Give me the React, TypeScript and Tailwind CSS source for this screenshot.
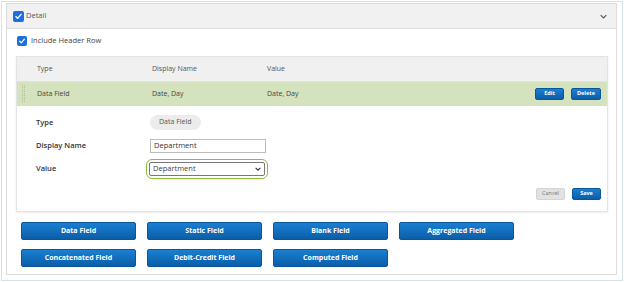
function CheckBox({ size }: { size: number }) {
  return (
    <span
      className="flex items-center justify-center rounded-[2px] bg-[#1b6fe0] shrink-0"
      style={{ width: size, height: size }}
    >
      <svg viewBox="0 0 12 12" className="w-[80%] h-[80%]">
        <path d="M2.5 6.3 L5 8.7 L9.6 3.2" fill="none" stroke="white" strokeWidth="1.9" strokeLinecap="round" strokeLinejoin="round" />
      </svg>
    </span>
  );
}

function SmallBtn({ label, w }: { label: string; w: string }) {
  return (
    <button
      className={`${w} h-[12px] rounded-[2px] border border-[#0b559a] bg-gradient-to-b from-[#1a7fd2] to-[#0b5ea8] text-white text-[5.5px] font-bold leading-none flex items-center justify-center`}
    >
      {label}
    </button>
  );
}

function Grip() {
  const dots = [];
  for (let r = 0; r < 9; r++) {
    for (let c = 0; c < 2; c++) {
      dots.push(<rect key={`${r}-${c}`} x={c * 2} y={r * 2} width="1" height="1" fill="#aebf9b" />);
    }
  }
  return (
    <svg viewBox="0 0 3 18" className="w-[3px] h-[18px]">
      {dots}
    </svg>
  );
}

export default function App() {
  const fields = [
    "Data Field",
    "Static Field",
    "Blank Field",
    "Aggregated Field",
    "Concatenated Field",
    "Debit-Credit Field",
    "Computed Field",
  ];

  return (
    <div className="w-[624px] h-[282px] p-px bg-white font-['Open_Sans',sans-serif]">
      <div className="h-full border border-[#d5e2ec] pl-[4px] pt-[1px] pr-[5px] pb-[5px]">
        <div className="h-full border border-[#dcdcdc] flex flex-col">
          {/* panel header */}
          <div className="h-[25px] bg-[#f1f1f1] border-b border-[#dedede] flex items-center pl-[6px] pr-[9px]">
            <CheckBox size={11} />
            <span className="ml-[2px] text-[7.5px] text-[#555]">Detail</span>
            <svg viewBox="0 0 10 6" className="ml-auto w-[7px] h-[5px]">
              <path d="M1 1 L5 5 L9 1" fill="none" stroke="#555" strokeWidth="1.6" />
            </svg>
          </div>

          <div className="flex-1 pl-[9px] pr-[8px] pt-[7px]">
            <div className="flex items-center h-[10px] ml-px">
              <CheckBox size={10} />
              <span className="ml-[4px] text-[7.5px] text-[#444]">Include Header Row</span>
            </div>

            {/* table card */}
            <div className="mt-[10px] border border-[#e3e3e3] shadow-[0_1px_2px_rgba(0,0,0,0.08)]">
              <div className="h-[25px] bg-[#f0f0f0] border-b border-[#e2e2e2] grid grid-cols-[115px_115px_1fr] items-center pl-[20px] text-[7px] text-[#555]">
                <span>Type</span>
                <span>Display Name</span>
                <span>Value</span>
              </div>
              <div className="h-[24px] bg-[#d4e3bd] flex items-center pl-[5px] pr-[6px] text-[7px] text-[#444]">
                <Grip />
                <div className="ml-[12px] grid grid-cols-[115px_115px_1fr] flex-1">
                  <span>Data Field</span>
                  <span>Date, Day</span>
                  <span>Date, Day</span>
                </div>
                <div className="flex gap-[7px]">
                  <SmallBtn label="Edit" w="w-[29px]" />
                  <SmallBtn label="Delete" w="w-[30px]" />
                </div>
              </div>

              {/* edit form */}
              <div className="pl-[19px] pr-[6px] pt-[9px] pb-[11px]">
                <div className="flex flex-col gap-[8px] text-[7.5px]">
                  <div className="flex items-center h-[15px]">
                    <span className="w-[114px] font-semibold text-[#333]">Type</span>
                    <span className="h-[15px] px-[9px] rounded-full bg-[#ececec] text-[#555] text-[7px] flex items-center">
                      Data Field
                    </span>
                  </div>
                  <div className="flex items-center h-[15px]">
                    <span className="w-[114px] font-semibold text-[#333]">Display Name</span>
                    <div className="w-[116px] h-[14px] border border-[#bdbdbd] pl-[3px] flex items-center text-[#333]">
                      Department
                    </div>
                  </div>
                  <div className="flex items-center h-[15px]">
                    <span className="w-[110px] font-semibold text-[#333]">Value</span>
                    <div className="p-[2px] border-[1.5px] border-[#86c03c] rounded-[6px]">
                      <div className="w-[116px] h-[14px] border border-[#777] rounded-[2px] pl-[3px] pr-[3px] flex items-center text-[#444]">
                        Department
                        <svg viewBox="0 0 10 6" className="ml-auto w-[6px] h-[4px]">
                          <path d="M1 1 L5 5 L9 1" fill="none" stroke="#333" strokeWidth="1.8" />
                        </svg>
                      </div>
                    </div>
                  </div>
                </div>
                <div className="mt-[12px] flex justify-end gap-[7px]">
                  <button className="w-[29px] h-[12px] rounded-[2px] bg-[#e2e2e2] border border-[#d4d4d4] text-[#777] text-[5.5px] leading-none flex items-center justify-center">
                    Cancel
                  </button>
                  <SmallBtn label="Save" w="w-[29px]" />
                </div>
              </div>
            </div>

            {/* field buttons */}
            <div className="mt-[10px] ml-[5px] grid grid-cols-[repeat(4,115px)] gap-x-[11px] gap-y-[9px]">
              {fields.map((f) => (
                <button
                  key={f}
                  className="h-[18px] rounded-[2px] border border-[#0b559a] bg-gradient-to-b from-[#1a7fd2] to-[#0b5ea8] text-white text-[7px] font-bold flex items-center justify-center"
                >
                  {f}
                </button>
              ))}
            </div>
          </div>
        </div>
      </div>
    </div>
  );
}
